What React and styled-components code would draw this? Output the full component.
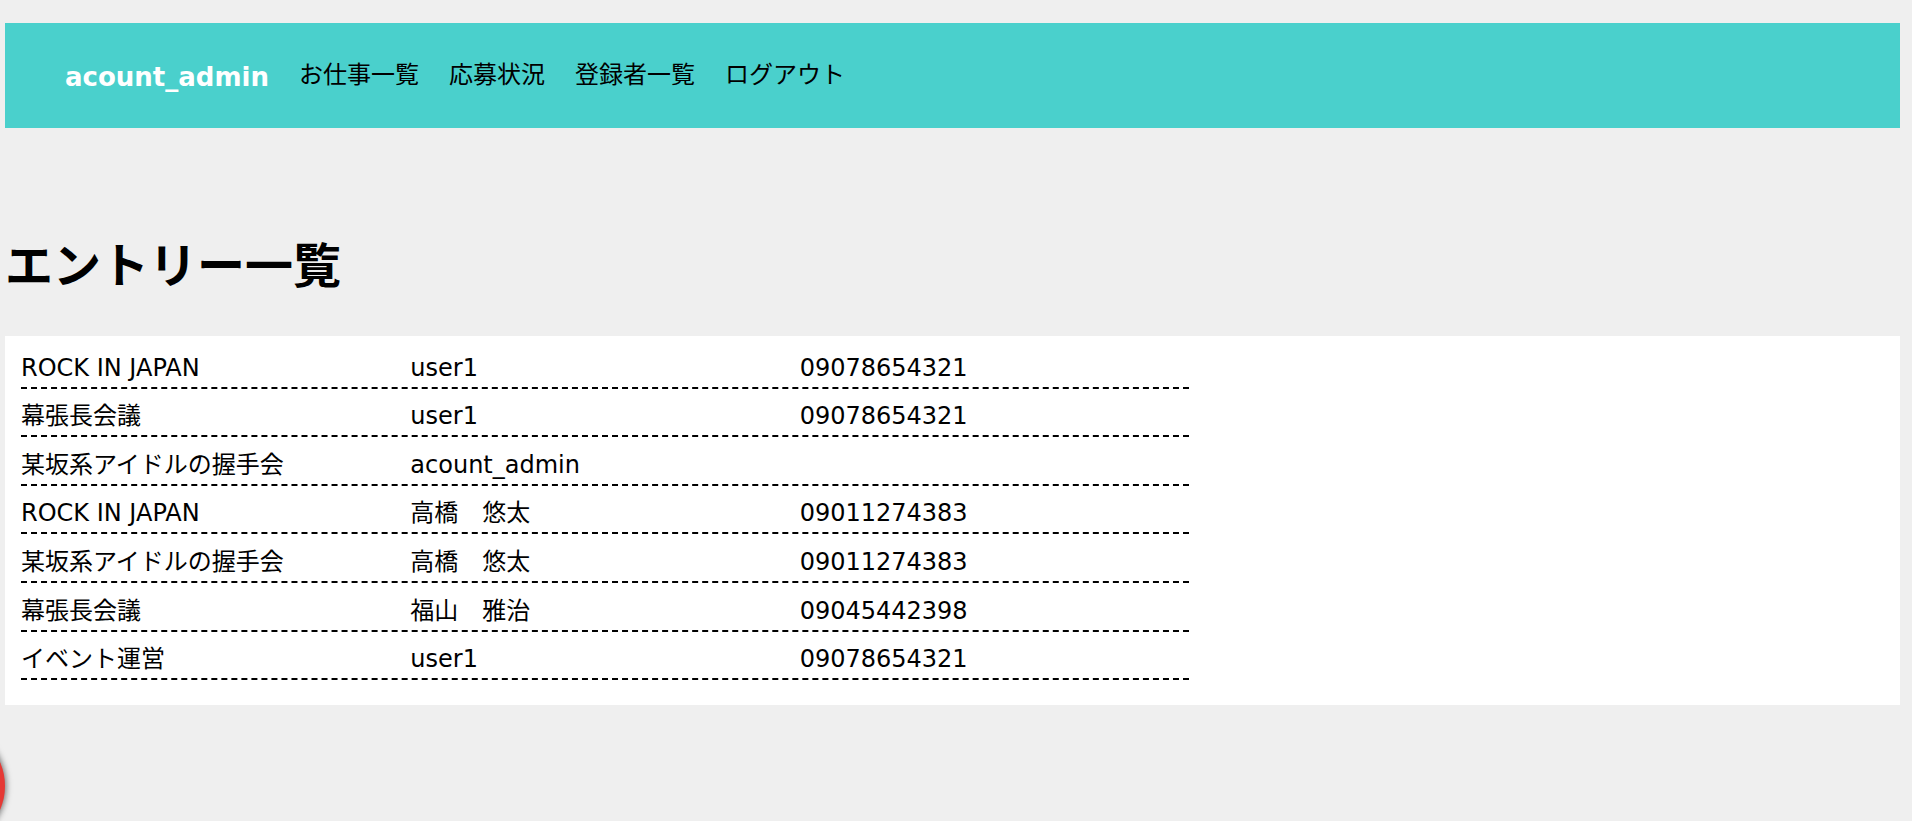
import React from 'react'
import styled, { createGlobalStyle } from 'styled-components'

const GlobalStyle = createGlobalStyle`
  html, body {
    margin: 0;
    padding: 0;
    background: #efefef;
  }
  body {
    font-family: "DejaVu Sans", "Noto Sans CJK JP", sans-serif;
    color: #000;
  }
`

const Page = styled.div`
  padding: 23px 12px 0 5px;
  min-height: 821px;
  box-sizing: border-box;
`

const Header = styled.header`
  display: flex;
  align-items: flex-start;
  height: 105px;
  box-sizing: border-box;
  padding: 37px 0 0 60px;
  background: #4ad0cc;
`

const Logo = styled.a`
  margin: 2px 30px 0 0;
  font-size: 26px;
  line-height: 30px;
  font-weight: bold;
  color: #fff;
  text-decoration: none;
`

const Nav = styled.ul`
  display: flex;
  gap: 30px;
  margin: 0;
  padding: 0;
  list-style: none;
`

const NavItem = styled.li`
  font-size: 24px;
  line-height: 30px;
  color: #000;
`

const Title = styled.h1`
  margin: 104px 0 44px;
  font-family: "Noto Sans CJK JP", sans-serif;
  font-size: 48px;
  line-height: 60px;
  font-weight: bold;
`

const Panel = styled.section`
  background: #fff;
  padding: 4px 16px 25px;
`

const Row = styled.div`
  display: grid;
  grid-template-columns: repeat(3, 1fr);
  width: 1168px;
  padding-top: 8.6px;
  border-bottom: 2px dashed #000;
`

const Cell = styled.span`
  font-size: 24px;
  line-height: 38px;
  white-space: nowrap;
`

const Fab = styled.div`
  position: fixed;
  left: -115px;
  top: 726px;
  width: 120px;
  height: 120px;
  border-radius: 50%;
  background: #e53935;
  box-shadow: 0 0 6px 1px rgba(0, 0, 0, 0.55);
`

const navLinks = ['お仕事一覧', '応募状況', '登録者一覧', 'ログアウト']

const entries = [
  ['ROCK IN JAPAN', 'user1', '09078654321'],
  ['幕張長会議', 'user1', '09078654321'],
  ['某坂系アイドルの握手会', 'acount_admin', ''],
  ['ROCK IN JAPAN', '高橋　悠太', '09011274383'],
  ['某坂系アイドルの握手会', '高橋　悠太', '09011274383'],
  ['幕張長会議', '福山　雅治', '09045442398'],
  ['イベント運営', 'user1', '09078654321'],
]

export default function App() {
  return (
    <Page>
      <GlobalStyle />
      <Header>
        <Logo>acount_admin</Logo>
        <Nav>
          {navLinks.map((l) => (
            <NavItem key={l}>{l}</NavItem>
          ))}
        </Nav>
      </Header>
      <Title>エントリー一覧</Title>
      <Panel>
        {entries.map((e, i) => (
          <Row key={i}>
            <Cell>{e[0]}</Cell>
            <Cell>{e[1]}</Cell>
            <Cell>{e[2]}</Cell>
          </Row>
        ))}
      </Panel>
      <Fab />
    </Page>
  )
}
